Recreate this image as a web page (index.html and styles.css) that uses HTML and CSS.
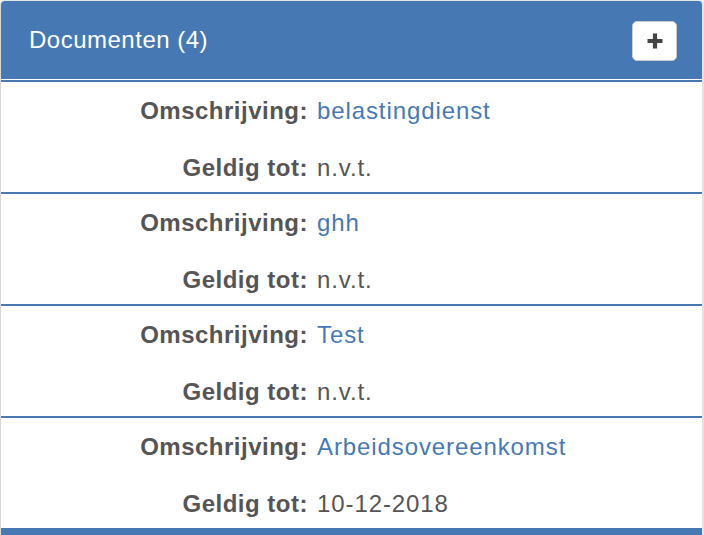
FILE: index.html
```html
<html>
<head>
<meta charset="utf-8">
<link rel="stylesheet" href="styles.css">
</head>
<body>
<div class="panel">
  <div class="panel-heading">
    <h2 class="panel-title">Documenten (4)</h2>
    <button type="button" class="button-add" aria-label="Toevoegen">
      <svg width="18" height="18" viewBox="0 0 18 18"><path d="M9 1.5v15M1.5 9h15" stroke="#444" stroke-width="4.2" fill="none"/></svg>
    </button>
  </div>

  <div class="doc-row">
    <span class="doc-label">Omschrijving:</span>
    <a class="doc-value doc-link" href="#">belastingdienst</a>
    <span class="doc-label">Geldig tot:</span>
    <span class="doc-value">n.v.t.</span>
  </div>

  <div class="doc-row">
    <span class="doc-label">Omschrijving:</span>
    <a class="doc-value doc-link" href="#">ghh</a>
    <span class="doc-label">Geldig tot:</span>
    <span class="doc-value">n.v.t.</span>
  </div>

  <div class="doc-row">
    <span class="doc-label">Omschrijving:</span>
    <a class="doc-value doc-link" href="#">Test</a>
    <span class="doc-label">Geldig tot:</span>
    <span class="doc-value">n.v.t.</span>
  </div>

  <div class="doc-row">
    <span class="doc-label">Omschrijving:</span>
    <a class="doc-value doc-link" href="#">Arbeidsovereenkomst</a>
    <span class="doc-label">Geldig tot:</span>
    <span class="doc-value">10-12-2018</span>
  </div>

  <div class="panel-footer"></div>
</div>
</body>
</html>
```

FILE: styles.css
```css
* {
  box-sizing: border-box;
}

body {
  margin: 0;
  background: #f2f2f2;
  font-family: "Liberation Sans", Arial, sans-serif;
  color: #555;
}

.panel {
  background: #fff;
  border-left: 1px solid #d8d8d8;
  border-right: 2px solid #e4e4e4;
  border-top: 1px solid #e4e4e4;
  border-radius: 5px 5px 0 0;
  overflow: hidden;
}

.panel-heading {
  height: 78px;
  background: #4679b3;
  display: flex;
  align-items: center;
  justify-content: space-between;
  padding: 0 25px 0 28px;
  margin-bottom: 1px;
}

.panel-title {
  margin: 0;
  font-size: 24px;
  font-weight: normal;
  letter-spacing: 0.5px;
  color: #fff;
}

.button-add {
  width: 45px;
  height: 40px;
  margin-top: 1px;
  padding: 0;
  background: #fff;
  border: 1px solid #ccc;
  border-radius: 5px;
  display: flex;
  align-items: center;
  justify-content: center;
}

.doc-row {
  border-top: 2px solid #4679b3;
  height: 112px;
  padding-top: 15px;
  display: grid;
  grid-template-columns: 307px 1fr;
  grid-template-rows: 28px 28px;
  column-gap: 9px;
  row-gap: 29px;
  font-size: 24px;
  line-height: 28px;
}

.doc-label {
  text-align: right;
  font-weight: bold;
  letter-spacing: 0.5px;
  color: #555;
}

.doc-value {
  letter-spacing: 0.9px;
  color: #555;
}

.doc-link {
  color: #4679b5;
  text-decoration: none;
}

.panel-footer {
  height: 8px;
  background: #4679b3;
}
```
